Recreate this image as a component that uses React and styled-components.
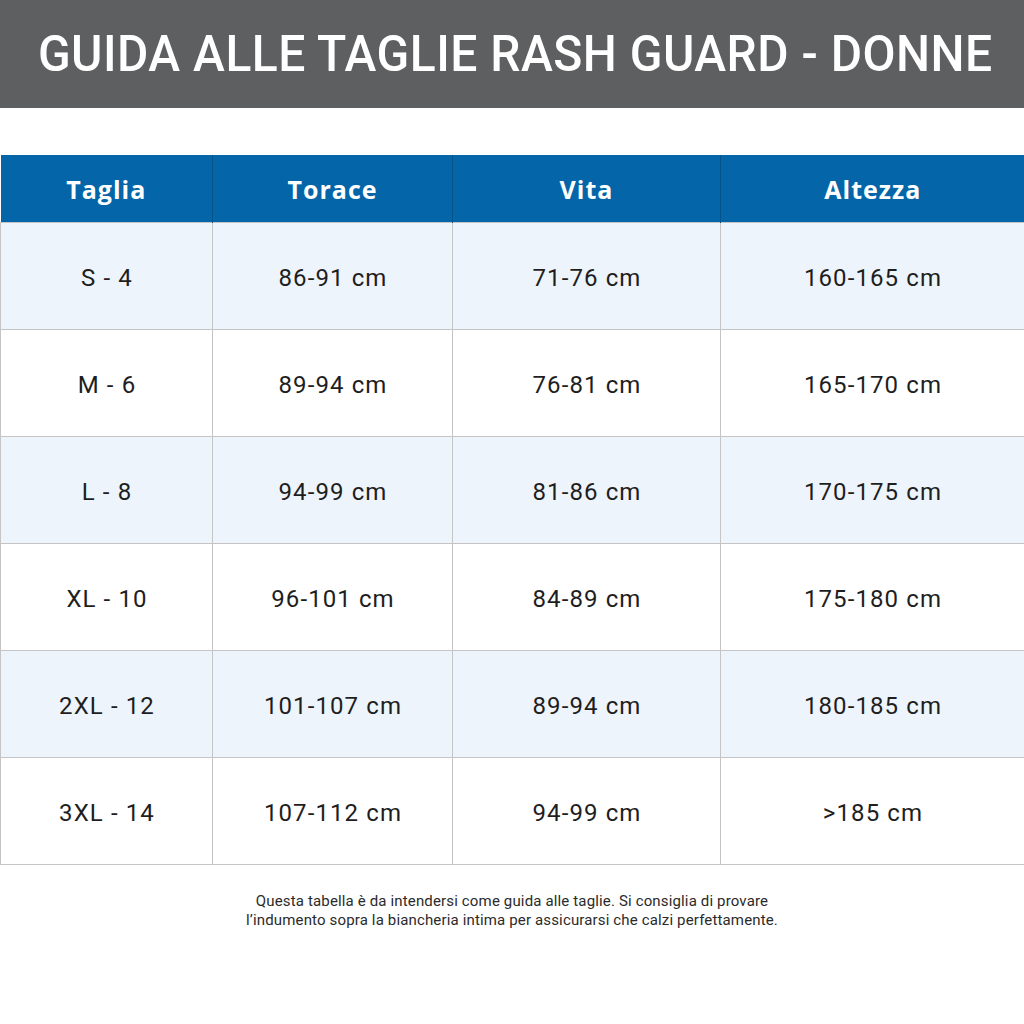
import React from 'react'
import styled, { createGlobalStyle } from 'styled-components'

const GlobalStyle = createGlobalStyle`
  html, body {
    margin: 0;
    padding: 0;
    background: #fff;
  }
  body {
    font-family: Roboto, "Liberation Sans", sans-serif;
  }
`

const rows = [
  ['S - 4', '86-91 cm', '71-76 cm', '160-165 cm'],
  ['M - 6', '89-94 cm', '76-81 cm', '165-170 cm'],
  ['L - 8', '94-99 cm', '81-86 cm', '170-175 cm'],
  ['XL - 10', '96-101 cm', '84-89 cm', '175-180 cm'],
  ['2XL - 12', '101-107 cm', '89-94 cm', '180-185 cm'],
  ['3XL - 14', '107-112 cm', '94-99 cm', '>185 cm'],
]

const widths = [212, 240, 268, 304]

export default function App() {
  return (
    <Page>
      <GlobalStyle />
      <TitleBar>
        <Title>GUIDA ALLE TAGLIE RASH GUARD - DONNE</Title>
      </TitleBar>
      <SizeTable>
        <colgroup>
          {widths.map((w, i) => <col key={i} style={{ width: w }} />)}
        </colgroup>
        <thead>
          <tr>
            <HeadCell>Taglia</HeadCell>
            <HeadCell>Torace</HeadCell>
            <HeadCell>Vita</HeadCell>
            <HeadCell>Altezza</HeadCell>
          </tr>
        </thead>
        <tbody>
          {rows.map((r, i) => (
            <Row key={i} $shaded={i % 2 === 0}>
              {r.map((c, j) => <Cell key={j}>{c}</Cell>)}
            </Row>
          ))}
        </tbody>
      </SizeTable>
      <Note>
        Questa tabella è da intendersi come guida alle taglie. Si consiglia di provare<br />
        l’indumento sopra la biancheria intima per assicurarsi che calzi perfettamente.
      </Note>
    </Page>
  )
}

const Page = styled.div`
  width: 1024px;
  height: 1024px;
  background: #fff;
  display: flex;
  flex-direction: column;
`

const TitleBar = styled.header`
  height: 108px;
  background: #5e5f61;
  display: flex;
  align-items: center;
  justify-content: center;
`

const Title = styled.h1`
  margin: 0;
  color: #fff;
  font-family: Roboto, "Liberation Sans", sans-serif;
  font-weight: 500;
  font-size: 50px;
  letter-spacing: 0.5px;
  transform: translateX(3px) scaleX(0.96);
  white-space: nowrap;
`

const SizeTable = styled.table`
  margin-top: 47px;
  width: 1024px;
  border-collapse: collapse;
  table-layout: fixed;
`

const HeadCell = styled.th`
  height: 67px;
  padding: 0;
  background: #0465a9;
  color: #fff;
  font-family: "Open Sans", "Liberation Sans", sans-serif;
  font-weight: 700;
  font-size: 25px;
  letter-spacing: 1px;
  text-align: center;
  border-left: 1px solid #04528a;
  &:first-child { border-left: none; }
`

const Row = styled.tr`
  background: ${p => (p.$shaded ? '#eef4fb' : '#fff')};
`

const Cell = styled.td`
  height: 102px;
  padding: 4px 0 0 1px;
  text-align: center;
  color: #1e1e1e;
  font-size: 24px;
  letter-spacing: 1.1px;
  font-family: Roboto, "Liberation Sans", sans-serif;
  border: 1px solid #c4c4c4;
`

const Note = styled.p`
  margin: 27px 0 0;
  text-align: center;
  color: #2b2b2b;
  font-family: Roboto, "Liberation Sans", sans-serif;
  font-size: 15px;
  line-height: 19px;
  letter-spacing: 0.15px;
`
